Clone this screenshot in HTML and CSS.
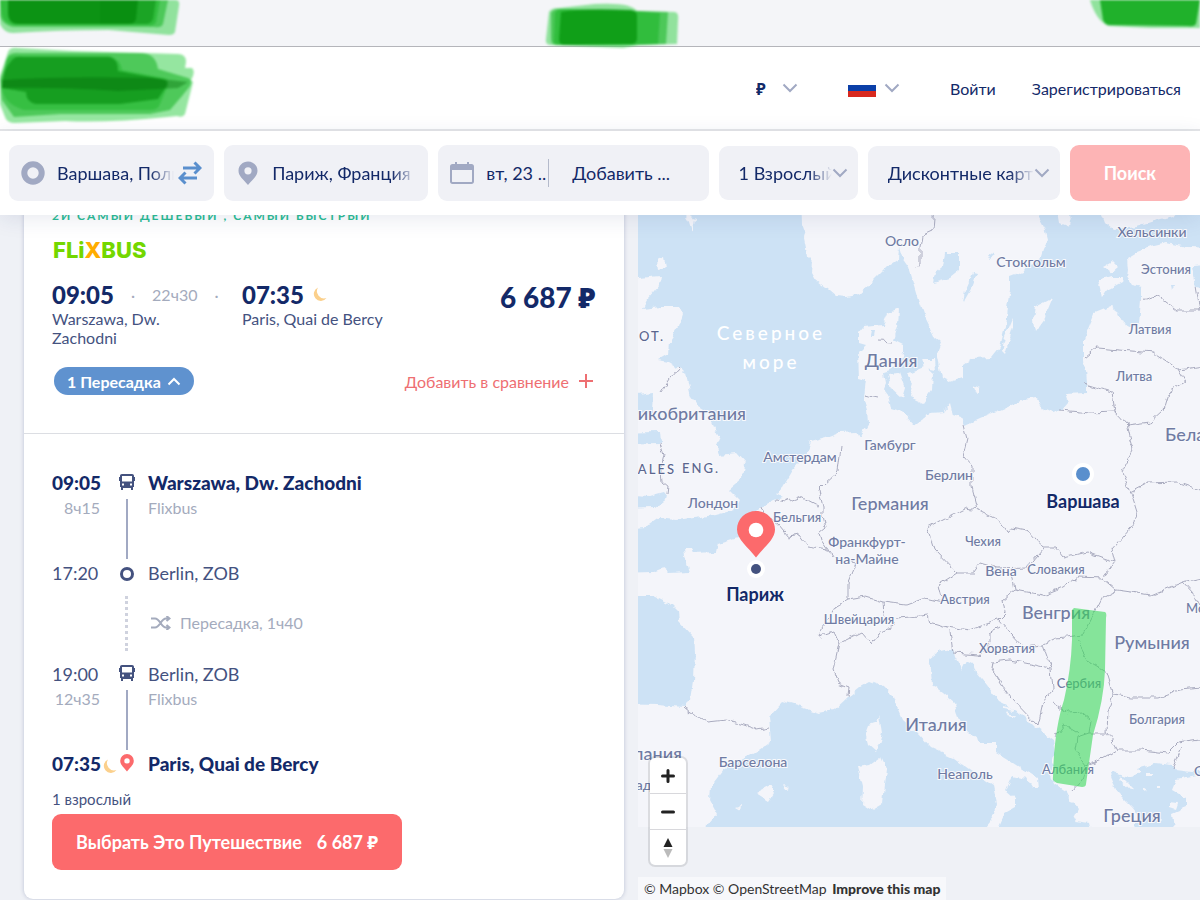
FILE: index.html
```
<!DOCTYPE html>
<html lang="ru">
<head>
  <meta charset="utf-8">
  <meta name="viewport" content="width=device-width, initial-scale=1.0">
  <title>Варшава - Париж</title>
  <link rel="stylesheet" href="styles.css">
</head>
<body>
  <div class="topbar"></div>

  <header class="nav">
    <label class="nav-select">
      <select aria-label="Валюта"><option>₽</option></select>
      <svg class="chevron" viewBox="0 0 16 10"><path d="M1.500 1.500L8 8l6.500-6.500"/></svg>
    </label>
    <button class="nav-flag" type="button" aria-label="Язык">
      <svg class="flag" viewBox="0 0 28 18"><path fill="#fff" d="M0 0h28v6H0z"/><path fill="#0b3fa8" d="M0 6h28v6H0z"/><path fill="#d8291f" d="M0 12h28v6H0z"/></svg>
      <svg class="chevron" viewBox="0 0 16 10"><path d="M1.500 1.500L8 8l6.500-6.500"/></svg>
    </button>
    <a href="#login">Войти</a>
    <a href="#signup">Зарегистрироваться</a>
  </header>

  <form class="search">
    <div class="field">
      <svg class="field-icon" viewBox="0 0 24 24"><circle cx="12" cy="12" r="8.700" fill="none" stroke="#a1a9c3" stroke-width="6"/></svg>
      <input class="fade" type="text" aria-label="Откуда" value="Варшава, Польша">
      <button class="swap" type="button" aria-label="Поменять местами">
        <svg viewBox="0 0 24 24"><path d="M5 7h17M16.500 1.500L22 7l-5.500 5.500M19 17H2M7.500 11.500L2 17l5.500 5.500"/></svg>
      </button>
    </div>
    <div class="field">
      <svg class="field-icon" viewBox="0 0 24 24"><path fill="#a1a9c3" fill-rule="evenodd" d="M12 0.500c-5.300 0-9.500 4-9.500 9.200C2.500 15 7 18 12 24c5-6 9.500-9 9.500-14.300C21.500 4.500 17.300.5 12 .5zm0 5.700a3.600 3.600 0 1 1 0 7.200 3.600 3.600 0 0 1 0-7.200z"/></svg>
      <input class="fade" type="text" aria-label="Куда" value="Париж, Франция">
    </div>
    <div class="field dates">
      <svg class="field-icon" viewBox="0 0 24 24"><path fill="#a1a9c3" fill-rule="evenodd" d="M5 1h2v2h10V1h2v2h2.500C23 3 24 4 24 5.500v15c0 1.500-1 2.500-2.500 2.500h-19C1 23 0 22 0 20.500v-15C0 4 1 3 2.500 3H5zM2 9v11.500c0 .3.200.5.500.5h19c.3 0 .5-.2.500-.5V9z"/></svg>
      <input class="date-out" type="text" aria-label="Дата туда" value="вт, 23 ..">
      <input class="date-back" type="text" aria-label="Дата обратно" value="Добавить ...">
    </div>
    <label class="field pick">
      <select class="fade" aria-label="Пассажиры"><option>1 Взрослый</option></select>
      <svg class="chevron" viewBox="0 0 16 10"><path d="M1.500 1.500L8 8l6.500-6.500"/></svg>
    </label>
    <label class="field pick">
      <select class="fade" aria-label="Дисконтные карты"><option>Дисконтные карты</option></select>
      <svg class="chevron" viewBox="0 0 16 10"><path d="M1.500 1.500L8 8l6.500-6.500"/></svg>
    </label>
    <button class="search-btn" type="submit">Поиск</button>
  </form>

  <main class="content">
    <section class="results">
      <article class="card">
        <div class="summary">
          <p class="tags">2й самый дешевый , самый быстрый</p>
          <p class="carrier">FLi<span>X</span>BUS</p>
          <div class="trip">
            <div class="trip-from">
              <p class="trip-time"><b>09:05</b> <i>·</i> <span>22ч30</span> <i>·</i></p>
              <p>Warszawa, Dw. Zachodni</p>
            </div>
            <div class="trip-to">
              <p class="trip-time"><b>07:35</b>
                <svg class="moon" viewBox="0 0 14 14"><path d="M5 .5A7 7 0 1 0 13.500 11 7.200 7.200 0 0 1 5 .5z"/></svg>
              </p>
              <p>Paris, Quai de Bercy</p>
            </div>
            <strong class="price">6 687 ₽</strong>
          </div>
          <div class="actions">
            <button class="pill" type="button">1 Пересадка
              <svg viewBox="0 0 14 9"><path d="M1.500 7.500L7 2l5.500 5.500"/></svg>
            </button>
            <button class="compare" type="button">Добавить в сравнение
              <svg viewBox="0 0 14 14"><path d="M7 0v14M0 7h14"/></svg>
            </button>
          </div>
        </div>

        <div class="details">
          <ol class="legs">
            <li class="leg main">
              <div class="leg-time">09:05<small>8ч15</small></div>
              <div class="rail">
                <svg class="bus" viewBox="0 0 16 18"><path fill-rule="evenodd" d="M3 1h10c1.300 0 2 .8 2 2v1h1v4h-1v6h-1v3h-2v-2H4v2H2v-3H1V8H0V4h1V3c0-1.200.7-2 2-2zm0 2v5.500h10V3zm0 7.500v2h2v-2zm8 0v2h2v-2z"/></svg>
                <span class="line"></span>
              </div>
              <div class="leg-place">Warszawa, Dw. Zachodni<small>Flixbus</small></div>
            </li>
            <li class="leg change">
              <div class="leg-time">17:20</div>
              <div class="rail">
                <span class="stop"></span>
                <span class="dots"></span>
              </div>
              <div class="leg-place">Berlin, ZOB
                <p class="transfer">
                  <svg viewBox="0 0 20 14"><path d="M0 2.500h4c5 0 6 9 11 9h4M0 11.500h4c5 0 6-9 11-9h4M15.500 0l3 2.500-3 2.500M15.500 9l3 2.500-3 2.500"/></svg>
                  Пересадка, 1ч40
                </p>
              </div>
            </li>
            <li class="leg">
              <div class="leg-time">19:00<small>12ч35</small></div>
              <div class="rail">
                <svg class="bus" viewBox="0 0 16 18"><path fill-rule="evenodd" d="M3 1h10c1.300 0 2 .8 2 2v1h1v4h-1v6h-1v3h-2v-2H4v2H2v-3H1V8H0V4h1V3c0-1.200.7-2 2-2zm0 2v5.500h10V3zm0 7.500v2h2v-2zm8 0v2h2v-2z"/></svg>
                <span class="line"></span>
              </div>
              <div class="leg-place">Berlin, ZOB<small>Flixbus</small></div>
            </li>
            <li class="leg main last">
              <div class="leg-time">07:35<svg class="moon" viewBox="0 0 14 14"><path d="M5 .5A7 7 0 1 0 13.500 11 7.200 7.200 0 0 1 5 .5z"/></svg></div>
              <div class="rail">
                <svg class="pin" viewBox="0 0 14 18"><path fill-rule="evenodd" d="M7 0a6.800 6.800 0 0 0-6.800 6.800C.2 11 4 13.500 7 17.500c3-4 6.800-6.500 6.800-10.700A6.800 6.800 0 0 0 7 0zm0 4.200a2.700 2.700 0 1 1 0 5.400 2.700 2.700 0 0 1 0-5.400z"/></svg>
              </div>
              <div class="leg-place">Paris, Quai de Bercy</div>
            </li>
          </ol>
          <p class="pax">1 взрослый</p>
          <button class="choose" type="button"><span>Выбрать Это Путешествие</span> <span>6 687 ₽</span></button>
        </div>
      </article>
    </section>

    <section class="map">
      <svg class="map-canvas" viewBox="638 215 562 612">
        <defs>
          <filter id="rough" filterUnits="userSpaceOnUse" x="620" y="200" width="600" height="650">
            <feTurbulence type="fractalNoise" baseFrequency="0.11" numOctaves="2" seed="4"/>
            <feDisplacementMap in="SourceGraphic" scale="7" xChannelSelector="R" yChannelSelector="G"/>
          </filter>
        </defs>
        <rect class="sea" x="638" y="215" width="562" height="612"/>
        <g filter="url(#rough)">
          <g class="land">
            <!-- Scandinavia -->
            <path d="M802 195L803 223L806 231L804 237L806 247L807 257L813 263L812 273L816 280L829 290L836 296L848 297L858 295L869 285L886 268L898 260L899 246L902 257L909 267L914 283L919 300L925 317L930 327L935 338L941 343L937 353L939 363L942 378L950 382L963 378L963 365L973 358L992 357L1000 347L1005 327L1007 307L1010 290L1010 277L1023 272L1027 265L1040 260L1043 250L1048 240L1045 228L1038 215V195z"/>
            <path d="M1100 195L1102 215L1105 223L1113 230L1137 227L1153 222L1173 217L1190 195z"/>
            <path d="M1057 205L1072 218L1070 227L1060 223zM1035 307L1052 298L1047 310L1045 318L1035 332L1033 320zM1013 318V327L1005 353L1002 350L1005 337zM972 385L979 388V393L974 390z"/>
            <path d="M1098 280L1112 276L1123 276L1122 282L1107 290L1102 298L1100 288zM1103 267L1112 262L1118 268L1112 273z"/>
            <!-- Continent -->
            <path d="M1220 248L1187 247L1167 243L1150 247L1137 252L1127 258L1128 270L1127 277L1132 285L1142 287V300L1140 323L1132 327L1123 323L1118 313L1110 307L1095 313L1090 325L1084 340V360L1086 383V393L1065 394L1068 403L1062 410L1053 413L1042 408L1037 398L1023 400L1000 410L980 418L965 425L962 418L953 415L950 403L943 412L930 413L914 424L903 412L891 408L889 398L883 390L886 383L884 372L896 368L904 352V345L894 340L898 327L899 308L888 313L883 325L864 327L859 333V343L866 345L858 353L859 377L866 379L864 397L868 410L869 423L866 428L859 438L856 432L839 433L826 438L811 442L808 450L804 457L793 470L783 487L774 493L783 498L773 500L761 507L751 517L748 532L738 537L718 543L716 552L693 553L691 547L683 547L684 557L689 572L669 573L663 568L653 572L615 573V595H653L669 603L678 612L679 622L693 637L694 653L693 680L690 700L683 707L658 705L615 704V850H705L708 824L717 813L710 800L711 787L724 770L755 753L771 742L769 717L783 702L800 707L819 713L834 710L848 697L859 688L870 682L884 687L893 697L897 708L902 720L917 733L931 748L953 758L970 770L992 785L996 803L994 815L985 826V850H999V826L1005 813L1014 808V798L1005 790L1012 775L1026 778L1032 788H1038L1037 778L1014 763L996 752V742H981L969 733L960 720L954 703L942 693L931 685L930 670L928 660L938 652L953 648L955 657L962 670L967 660L973 663L976 672L987 685L999 702L1021 713L1035 727L1053 740L1055 753L1051 770L1055 785L1066 792L1071 802L1078 810L1073 820L1089 822L1096 850H1220z"/>
            <!-- Britain -->
            <path d="M615 279L638 278L661 276L659 285L649 297L643 309L661 307H679L683 315L679 327L669 343L668 354L658 360L669 362L679 368L686 375L691 397L698 407L708 413L714 427L721 440L716 443L719 455L736 453L745 463L743 478L729 490L739 500L734 510L716 515L693 518L676 520L659 518L646 527L615 530z"/>
            <path d="M686 215L695 218L693 231L690 222zM657 260L664 257L666 268L658 270z"/>
            <!-- Islands -->
            <path d="M887 374L899 373L904 387L901 397L891 388zM908 373L925 366L933 373L932 390L923 403L910 397L914 383zM923 360H935L936 370L925 368z"/>
            <path d="M879 715L882 733L876 752L868 745L865 733L868 725L877 722zM881 757L886 768L882 803L870 810L862 805L863 787L858 767L870 765zM756 793L771 785L775 792L769 801zM782 785L790 787L786 790zM735 808L741 806L740 811z"/>
          </g>
          <g class="sea">
            <path d="M945 253L960 253V270L950 278L933 283L935 273L943 266zM973 272L977 273L972 287L963 303L965 290zM987 254L996 255L990 259zM1193 265L1215 263V290L1197 287zM1170 285L1173 285L1171 290z"/>
            <path d="M615 398L653 393L652 413L615 415zM615 433L660 432L661 443L615 444zM615 495L649 497L664 493L668 498L656 507L615 508zM872 331L876 331L875 336L871 336z"/>
            <path d="M1129 850L1136 820L1140 817L1132 807L1118 793L1111 777L1114 772L1132 778L1140 772L1136 768L1154 763L1172 765L1176 770L1192 772L1220 768V776L1197 776L1176 780L1172 790L1186 798V807L1172 813L1176 850z"/>
          </g>
          <path class="land" d="M1147 773h6v4h-6zM1156 785h5v3h-5zM1169 802l8 1-2 6-6-2zM1120 775l14 14-3 1-13-12zM1158 818l5 2-3 3zM1143 787l4 3-4 1zM1003 706l12 3-2 2-10-2zM1006 712l10 4-2 1-9-3z"/>
          <g class="border">
            <path d="M679 368L670 378L661 392M660 443L664 455L661 468L662 482L668 487L667 495M841 445L838 472L824 485L819 490L823 507V515L826 527L819 533L821 540L828 550M776 500L786 502L799 497L818 507M761 507L764 515L779 525L789 537L799 535L808 547L828 550L833 558L856 563L848 583V600L866 597L883 602L906 605L925 598L942 602L938 585L957 573"/>
            <path d="M848 600L836 607L821 630L819 637L834 632L839 643L861 632L871 643L879 632L896 625L884 615L883 602M896 618L910 617L928 615L930 622L947 627L970 630L998 620M839 643L836 657L833 670L838 683L848 687L847 697M683 707L690 713L708 722L726 720L744 725L758 730L769 728"/>
            <path d="M963 425L967 440L963 457L972 467V487L978 510L967 508L943 520L928 528L935 550L957 573L973 573L980 563L997 568L1027 567L1043 548L1027 530L1012 527L1008 533L998 520L978 510M1043 548H1055L1063 558L1087 552L1115 562L1103 578L1077 577L1063 587L1043 595L1015 590L1012 573M1015 590L1003 600L1005 613L998 620L1023 647L1043 645L1057 638L1083 635L1103 597L1117 590L1103 578"/>
            <path d="M1127 423L1130 437L1134 450L1122 473L1130 490L1137 512L1135 523L1112 550L1115 562M1130 492L1147 483L1177 482L1215 495M1117 590L1152 595L1183 582L1215 575M1183 582L1193 593L1200 605M1060 410L1090 413L1115 412L1127 425L1150 422L1163 410L1168 393L1185 382L1178 370L1153 353L1120 350L1097 348L1085 358M1115 412L1112 392L1082 383M1142 300L1157 295L1177 310H1215M1178 370L1215 364M1200 310L1196 286"/>
            <path d="M950 630L953 653L980 655L990 643V633L1000 627M992 670L993 662L1010 660L1050 668M992 670L1010 697L1037 725L1042 703L1053 690L1051 668L1043 645M1077 640L1090 663L1107 673L1114 695L1132 698L1158 698L1179 690L1215 687M1114 695L1108 712L1107 731L1117 750L1100 760L1086 765L1075 750L1077 737L1089 733H1107M1117 750L1140 750L1168 753L1179 742L1215 737M1181 748L1172 768M1055 737L1064 725L1077 733M1086 765L1082 780L1071 792M1053 703L1068 713L1082 712L1091 720L1089 733"/>
            <path d="M935 205L933 230L922 235L920 247V265L916 267M878 341L892 342M865 395L879 398"/>
          </g>
        </g>
        <g class="labels">
          <g class="city">
            <text x="902" y="246">Осло</text>
            <text x="1031" y="267">Стокгольм</text>
            <text x="1152" y="237">Хельсинки</text>
            <text x="890" y="450">Гамбург</text>
            <text x="800" y="462">Амстердам</text>
            <text x="949" y="480">Берлин</text>
            <text x="713" y="508">Лондон</text>
            <text x="867" y="547">Франкфурт-</text>
            <text x="867" y="564">на-Майне</text>
            <text x="1001" y="576">Вена</text>
            <text x="753" y="767">Барселона</text>
            <text x="965" y="779">Неаполь</text>
            <text class="from" x="623" y="790">Мадрид</text>
            <text class="from" x="1194" y="776">Стамбул</text>
          </g>
          <g class="small">
            <text x="1166" y="274">Эстония</text>
            <text x="1150" y="334">Латвия</text>
            <text x="1134" y="381">Литва</text>
            <text x="797" y="522">Бельгия</text>
            <text x="983" y="546">Чехия</text>
            <text x="1056" y="574">Словакия</text>
            <text x="965" y="604">Австрия</text>
            <text x="859" y="624">Швейцария</text>
            <text x="1007" y="653">Хорватия</text>
            <text x="1079" y="688">Сербия</text>
            <text x="1157" y="724">Болгария</text>
            <text x="1068" y="774">Албания</text>
            <text class="from" x="1186" y="613">Молдова</text>
          </g>
          <g class="country">
            <text x="891" y="367">Дания</text>
            <text x="890" y="510">Германия</text>
            <text x="1056" y="619">Венгрия</text>
            <text x="1152" y="649">Румыния</text>
            <text x="936" y="731">Италия</text>
            <text x="1132" y="822">Греция</text>
            <text class="from" x="1165" y="441">Беларусь</text>
            <text class="to" x="746" y="420">Великобритания</text>
            <text class="to" x="682" y="760">Испания</text>
          </g>
          <g class="region">
            <text class="to" x="665" y="341">СОТ.</text>
            <text class="to" x="676" y="474">WALES</text>
            <text class="to" x="720" y="473">ENG.</text>
          </g>
          <g class="water">
            <text x="771" y="340">Северное</text>
            <text x="771" y="369">море</text>
          </g>
          <g class="point">
            <text x="1083" y="508">Варшава</text>
            <text x="755" y="601">Париж</text>
          </g>
        </g>
        <circle cx="1083" cy="474" r="11" fill="#fff"/>
        <circle cx="1083" cy="474" r="7" fill="#5a8fcd"/>
        <circle cx="756" cy="569" r="9" fill="#fff"/>
        <circle cx="756" cy="569" r="5" fill="#44527f"/>
        <path fill="#fc6a6c" d="M756 511c-10.500 0-19 8-19 18.500 0 10 11 17.500 19 28 8-10.500 19-18 19-28C775 519 766.500 511 756 511z"/>
        <circle cx="756" cy="530" r="7.300" fill="#fff"/>
        <path class="marker" d="M1074 608L1105 612Q1107 613 1106 618L1105 670Q1104 700 1093 735L1086 784Q1086 787 1082 787L1057 783Q1052 781 1053 777Q1054 730 1064 700Q1071 670 1072 640L1072 610z"/>
      </svg>
      <div class="zoom">
        <button type="button" aria-label="Приблизить"><svg viewBox="0 0 14 14"><path d="M7 1.500v11M1.500 7h11"/></svg></button>
        <button type="button" aria-label="Отдалить"><svg viewBox="0 0 14 14"><path d="M1.500 7h11"/></svg></button>
        <button type="button" aria-label="Север"><svg class="compass" viewBox="0 0 10 22"><path fill="#222" d="M5 1l4.500 9h-9z"/><path fill="#bbb" d="M5 21l4.500-9h-9z"/></svg></button>
      </div>
      <div class="attribution">
        <a href="#mapbox">© Mapbox</a> <a href="#osm">© OpenStreetMap</a> <a class="improve" href="#improve">Improve this map</a>
      </div>
    </section>
  </main>

  <!-- marker strokes over the top of the window -->
  <svg class="scribble" viewBox="0 0 200 125">
    <path fill="#4fd560" fill-opacity=".6" d="M0 0h176q4 0 3 6l-4 26q-1 3-6 3l-60-5q-50 0-96 3Q4 33 0 24z"/>
    <path fill="#1fb52c" fill-opacity=".6" d="M0 0h168l-5 24q-2 4-8 3L20 27Q4 28 0 16z"/>
    <path fill="#1fb52c" fill-opacity=".6" d="M0 0h160l-4 22q-2 4-8 3L20 25Q4 26 2 14z"/>
    <path fill="#068c0e" fill-opacity=".85" d="M8 0h130l-2 19q-1 5-8 5H18Q8 24 8 12z"/>
    <path fill="#068c0e" fill-opacity=".5" d="M100 0h56l-3 19q-2 5-8 5h-45z"/>
    <path fill="#4fd560" fill-opacity=".6" d="M8 52q2-5 10-4l55 3 105 3q8 0 8 8l-1 6 7 0q4 4-1 12l2 2-8 32q-2 4-8 2l-10 1q-60 6-102 4l-50 2q-8 0-10-6L0 104V76z"/>
    <path fill="#1fb52c" fill-opacity=".6" d="M8 56q4-4 12-3h120q16 0 18 16l30 9q5 2 2 8l-8 10-12 14-20 4H60L14 117 2 100 0 80z"/>
    <path fill="#1fb52c" fill-opacity=".5" d="M6 60q4-5 12-4h90q12 2 14 14l42 8q8 2 2 12l-6 14q-2 6-10 6H24Q4 104 2 88z"/>
    <path fill="#068c0e" fill-opacity=".65" d="M12 60q4-4 10-3h88q8 2 8 14l44 8q8 2 4 8l-8 12-38 5H36q-10-2-10-12L2 88Q2 70 12 60z"/>
    <path fill="#036b08" fill-opacity=".4" d="M2 80q60-4 150-2l36 4-10 6-60 3q-60-4-116-3z"/>
  </svg>
  <svg class="scribble middle" viewBox="0 0 140 50">
    <path fill="#4fd560" fill-opacity=".6" d="M6 12q2-4 10-4l36-4q36-2 42 7l38 1q4 1 3 8l-1 24-38 1-16 3-72-3q-6 0-5-6z"/>
    <path fill="#1fb52c" fill-opacity=".6" d="M8 13q2-4 8-4l77 2 32 1-2 32-34 1H14q-6 0-6-6z"/>
    <path fill="#1fb52c" fill-opacity=".6" d="M12 13q2-4 8-4l73 2 24 2-2 31-30 1H16q-6 0-5-6z"/>
    <path fill="#0a9a13" fill-opacity=".85" d="M18 12q20-4 70-2 6 1 6 6v22q0 6-6 6l-66 1q-6 0-6-6z"/>
  </svg>
  <svg class="scribble corner" viewBox="0 0 110 30">
    <path fill="#4fd560" fill-opacity=".6" d="M0 0h110v28H60L18 26Q6 20 0 0z"/>
    <path fill="#1aae25" fill-opacity=".95" d="M10 0h100l-4 24q-2 3-8 2L20 25q-5 0-7-5z"/>
  </svg>
</body>
</html>
```
FILE: styles.css
```
* {
  box-sizing: border-box;
}

html, body {
  margin: 0;
  height: 100%;
}

body {
  display: flex;
  flex-direction: column;
  overflow: hidden;
  position: relative;
  background: #eff1f6;
  color: #132968;
  font-family: Lato, "Noto Sans", "Liberation Sans", sans-serif;
  font-size: 16px;
}

p, ol {
  margin: 0;
  padding: 0;
}

button, input, select {
  font: inherit;
  color: inherit;
  border: 0;
  background: none;
  padding: 0;
  margin: 0;
  min-width: 0;
}

select {
  appearance: none;
}

button {
  cursor: pointer;
}

a {
  color: inherit;
  text-decoration: none;
}

.topbar {
  flex: none;
  height: 47px;
  background: #f4f5f8;
  border-bottom: 1px solid #b4b5ba;
}

/* header */
.nav {
  flex: none;
  display: flex;
  align-items: center;
  justify-content: flex-end;
  gap: 50px;
  height: 84px;
  padding: 0 19px;
  background: #fff;
  border-bottom: 2px solid #e5e6e8;
}

.nav a + a {
  margin-left: -14px;
}

.nav-select, .nav-flag {
  display: flex;
  align-items: center;
}

.nav-select {
  gap: 16px;
  font-weight: bold;
}

.nav-flag {
  gap: 8px;
}

.flag {
  width: 28px;
  height: 18px;
}

.chevron {
  width: 16px;
  height: 10px;
  fill: none;
  stroke: #a1a9c3;
  stroke-width: 2;
}

/* search form */
.search {
  flex: none;
  display: grid;
  grid-template-columns: 205fr 204fr 270fr 139fr 192fr 120fr;
  align-items: center;
  gap: 10px;
  height: 84px;
  padding: 0 10px 0 9px;
  background: #fff;
  box-shadow: 0 4px 20px rgba(30, 50, 110, 0.1);
  position: relative;
  z-index: 2;
  font-size: 18px;
}

.field {
  display: flex;
  align-items: center;
  min-width: 0;
  height: 56px;
  padding: 0 12px;
  background: #f0f1f6;
  border-radius: 9px;
}

.field-icon {
  flex: none;
  width: 24px;
  height: 24px;
  margin-right: 12px;
}

.field input, .field select {
  flex: 1;
  width: 0;
  height: 40px;
}

.fade {
  mask-image: linear-gradient(to left, transparent 0, #000 24px);
}

.swap {
  flex: none;
  height: 24px;
  margin-left: 4px;
}

.swap svg {
  width: 24px;
  height: 24px;
  fill: none;
  stroke: #5a8fcd;
  stroke-width: 3;
}

.dates .date-out {
  flex: 0 0 63px;
  height: 28px;
  border-right: 1px solid #b4bacb;
}

.dates .date-back {
  margin-left: 23px;
}

.pick {
  height: 54px;
  padding: 0 10px 0 20px;
}

.search-btn {
  height: 56px;
  border-radius: 9px;
  background: #fdb4b5;
  color: #fff;
  font-weight: bold;
}

/* results */
.content {
  flex: 1;
  min-height: 0;
  display: grid;
  grid-template-columns: 638fr 562fr;
}

.results {
  min-height: 0;
  overflow: hidden;
  padding: 0 14px 0 24px;
}

.card {
  margin-top: -30px;
  background: #fff;
  border-radius: 9px;
  box-shadow: 0 0 4px rgba(30, 50, 110, 0.25);
}

.summary {
  padding: 20px 28px 38px;
  border-bottom: 1px solid #dcdee3;
}

.tags {
  font-size: 12px;
  line-height: 22px;
  font-weight: bold;
  letter-spacing: 2px;
  text-transform: uppercase;
  color: #2dbd95;
}

.carrier {
  margin-top: 13px;
  padding-left: 1px;
  font-family: Inter, sans-serif;
  font-size: 22px;
  line-height: 20px;
  font-weight: 800;
  color: #73d700;
}

.carrier span {
  color: #ffad00;
}

.trip {
  display: flex;
  margin-top: 19px;
  line-height: 19px;
  color: #44527f;
}

.trip-from {
  width: 190px;
  padding-right: 60px;
}

.trip-time {
  display: flex;
  align-items: center;
  gap: 17px;
  height: 30px;
  color: #a4abbd;
  white-space: nowrap;
}

.trip-time b {
  font-size: 24px;
  font-weight: 900;
  color: #132968;
}

.trip-to .trip-time {
  gap: 9px;
}

.moon {
  width: 14px;
  height: 14px;
  fill: #fbd08c;
}

.price {
  margin-left: auto;
  font-size: 28px;
  line-height: 36px;
  font-weight: 900;
  color: #132968;
}

.actions {
  display: flex;
  align-items: center;
  justify-content: space-between;
  margin-top: 20px;
}

.pill {
  display: flex;
  align-items: center;
  gap: 6px;
  height: 28px;
  margin-left: 2px;
  padding: 0 13px;
  border-radius: 14px;
  background: #5f92cf;
  color: #fff;
  font-weight: bold;
}

.pill svg {
  width: 14px;
  height: 9px;
  fill: none;
  stroke: #fff;
  stroke-width: 2;
}

.compare {
  display: flex;
  align-items: center;
  gap: 10px;
  padding-right: 3px;
  color: #ee6f72;
}

.compare svg {
  width: 14px;
  height: 14px;
  stroke: #ee6f72;
  stroke-width: 2;
}

/* legs */
.details {
  padding: 39px 28px 29px;
}

.legs {
  list-style: none;
}

.leg {
  display: grid;
  grid-template-columns: 64px 21px 1fr;
  min-height: 90px;
  font-size: 18px;
  line-height: 20px;
  color: #44527f;
}

.leg.main {
  font-size: 19px;
  font-weight: 900;
  color: #132968;
}

.leg.change {
  min-height: 101px;
}

.leg.last {
  min-height: 20px;
}

.leg small {
  display: block;
  margin-top: 5px;
  font-size: 16px;
  font-weight: normal;
  color: #a4abbd;
}

.leg-time {
  white-space: nowrap;
}

.leg-time small {
  width: 48px;
  text-align: right;
}

.leg-time .moon {
  margin-left: 2px;
  vertical-align: -2px;
}

.leg-place {
  padding-left: 11px;
}

.rail {
  display: flex;
  flex-direction: column;
  align-items: center;
}

.bus {
  width: 16px;
  height: 18px;
  fill: #44527f;
}

.pin {
  width: 14px;
  height: 18px;
  fill: #fc6a6c;
}

.line {
  flex: 1;
  width: 2px;
  margin: 8px 0 4px;
  background: #a1a9c3;
}

.stop {
  width: 14px;
  height: 14px;
  margin-top: 4px;
  border: 3px solid #44527f;
  border-radius: 50%;
}

.dots {
  flex: 1;
  margin: 15px 0 13px;
  border-left: 3px dotted #cfd2de;
}

.transfer {
  display: flex;
  align-items: center;
  gap: 9px;
  margin-top: 30px;
  padding-left: 3px;
  font-size: 16px;
  color: #a4abbd;
}

.transfer svg {
  width: 20px;
  height: 14px;
  fill: none;
  stroke: #a4abbd;
  stroke-width: 2;
}

.pax {
  margin-top: 15px;
  font-size: 15px;
  line-height: 20px;
  color: #44527f;
}

.choose {
  display: flex;
  align-items: center;
  gap: 15px;
  height: 56px;
  margin-top: 5px;
  padding: 0 24px;
  border-radius: 9px;
  background: #fc6a6c;
  color: #fff;
  font-size: 18px;
  font-weight: bold;
}

/* map */
.map {
  position: relative;
  min-height: 0;
  overflow: hidden;
}

.map-canvas {
  display: block;
  width: 100%;
}

.sea {
  fill: #cde2f5;
}

.land {
  fill: #f4f5fa;
}

.border {
  fill: none;
  stroke: #a9abbf;
  stroke-width: 1;
}

.labels {
  text-anchor: middle;
  font-weight: 500;
  fill: #6f7ba3;
  stroke: #f8f9fc;
  stroke-width: 2px;
  paint-order: stroke;
}

.city {
  font-size: 14px;
}

.small {
  font-size: 13px;
}

.country {
  font-size: 18px;
}

.from {
  text-anchor: start;
}

.to {
  text-anchor: end;
}

.region {
  font-size: 13px;
  letter-spacing: 2px;
  fill: #5b668f;
}

.water {
  font-size: 19px;
  letter-spacing: 3px;
  fill: #fff;
  stroke: none;
}

.point {
  font-size: 18px;
  font-weight: bold;
  fill: #132968;
}

.marker {
  fill: #3bd95a;
  fill-opacity: 0.6;
}

.zoom {
  position: absolute;
  left: 12px;
  bottom: 35px;
  display: flex;
  flex-direction: column;
  width: 36px;
  border-radius: 5px;
  background: #fff;
  box-shadow: 0 0 0 2px rgba(0, 0, 0, 0.1);
}

.zoom button {
  display: flex;
  align-items: center;
  justify-content: center;
  height: 35px;
}

.zoom button + button {
  height: 36px;
  border-top: 1px solid #d8d8dc;
}

.zoom svg {
  width: 14px;
  height: 14px;
  stroke: #222;
  stroke-width: 3;
  stroke-linecap: round;
}

.zoom .compass {
  width: 10px;
  height: 22px;
  stroke: none;
}

.attribution {
  position: absolute;
  left: 0;
  bottom: 0;
  padding: 0 6px;
  background: rgba(255, 255, 255, 0.5);
  font-size: 14px;
  line-height: 23px;
  color: #333;
}

.improve {
  margin-left: 2px;
  font-weight: 900;
}

/* marker strokes */
.scribble {
  position: absolute;
  top: 0;
  left: 0;
  z-index: 3;
  width: 200px;
  height: 125px;
  filter: blur(1px);
  pointer-events: none;
}

.scribble.middle {
  left: 45%;
  margin-left: 3px;
  width: 140px;
  height: 50px;
}

.scribble.corner {
  left: auto;
  right: 0;
  width: 110px;
  height: 30px;
}
```
